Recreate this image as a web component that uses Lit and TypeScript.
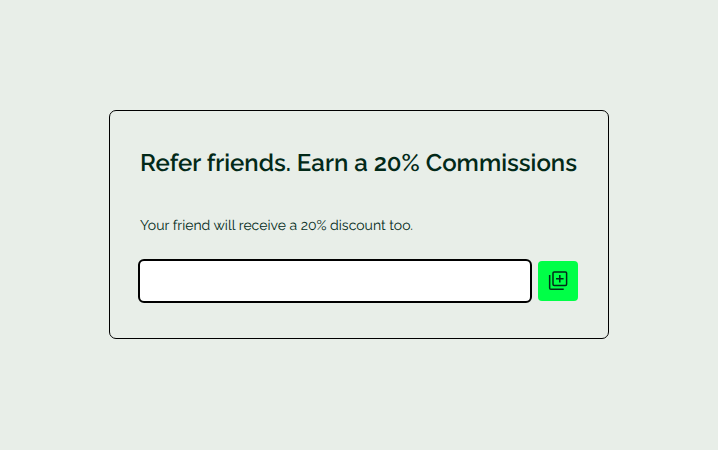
import { LitElement, html, css } from "lit";
import { customElement } from "lit/decorators.js";

@customElement("app-root")
export class AppRoot extends LitElement {
  static styles = css`
    :host {
      display: flex;
      align-items: center;
      justify-content: center;
      height: 100vh;
      box-sizing: border-box;
      padding-bottom: 1px;
      background: #e8eee8;
      color: #022918;
      font-family: Raleway, Lato, "Open Sans", sans-serif;
      text-rendering: geometricPrecision;
    }
    .card {
      box-sizing: border-box;
      width: 500px;
      height: 229px;
      padding: 30px 30px 0;
      border: 1px solid #000;
      border-radius: 7px;
    }
    h1 {
      margin: 0;
      font-size: 24px;
      font-weight: 600;
      line-height: 44px;
      letter-spacing: 0.015px;
      white-space: nowrap;
    }
    p {
      margin: 31px 0 0;
      font-size: 14px;
      font-weight: 400;
      line-height: 20px;
      white-space: nowrap;
    }
    .row {
      display: flex;
      gap: 8px;
      margin-top: 25px;
    }
    input {
      flex: 1;
      min-width: 0;
      height: 40px;
      box-sizing: border-box;
      border: 0;
      border-radius: 4px;
      outline: 2px solid #000;
      background: #fff;
      padding: 0 12px;
      font: inherit;
    }
    button {
      display: grid;
      place-items: center;
      width: 40px;
      height: 40px;
      padding: 0;
      border: 0;
      border-radius: 4px;
      background: #00ff47;
      color: #022918;
    }
    svg {
      display: block;
      width: 24px;
      height: 24px;
    }
  `;

  render() {
    return html`
      <section class="card">
        <h1>Refer friends. Earn a 20% Commissions</h1>
        <p>Your friend will receive a 20% discount too.</p>
        <div class="row">
          <input type="text" aria-label="Referral link" />
          <button aria-label="Copy link">
            <svg viewBox="0 0 24 24" fill="none" stroke="currentColor" stroke-width="1.5">
              <rect x="7" y="2.9" width="13.6" height="13.6" rx="1.2" />
              <path d="M3.65 6v13q0 1.25 1.25 1.25H17.7M13.8 5.9v7.6M10 9.7h7.6" />
            </svg>
          </button>
        </div>
      </section>
    `;
  }
}
